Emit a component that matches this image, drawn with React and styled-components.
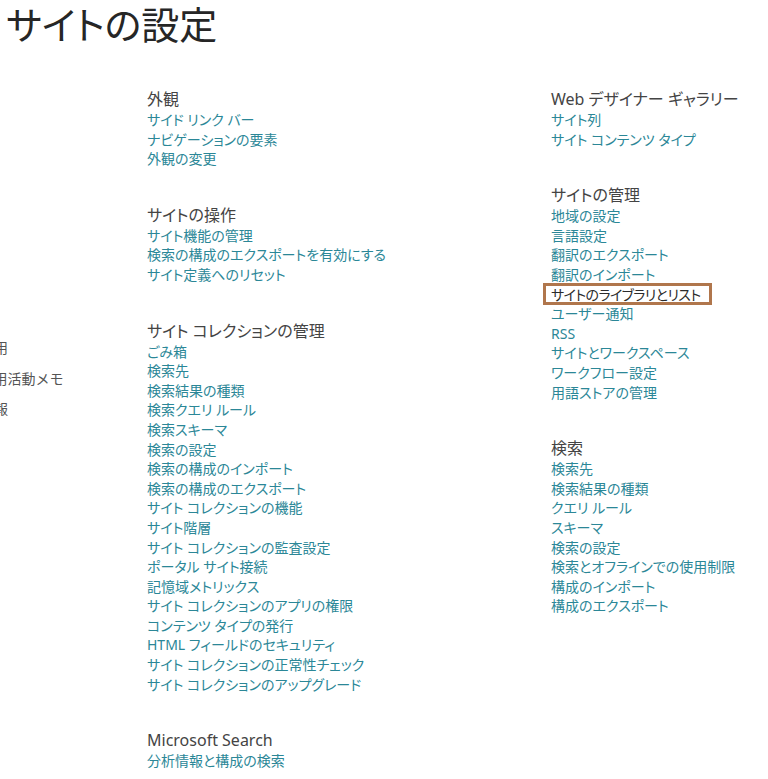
import React from 'react'
import styled, { createGlobalStyle } from 'styled-components'

const GlobalStyle = createGlobalStyle`
	html, body {
		margin: 0;
		padding: 0;
		background: #ffffff;
		overflow: hidden;
	}
	body {
		font-family: "Noto Sans", "Noto Sans CJK JP", sans-serif;
		font-feature-settings: "palt";
	}
`

const Page = styled.div`
	width: 768px;
	height: 779px;
	overflow: hidden;
`

const PageTitle = styled.h1`
	margin: 0 0 42px 6px;
	font-size: 38px;
	line-height: 46px;
	font-weight: 400;
	color: #262626;
	font-family: "Noto Sans CJK JP", sans-serif;
	font-feature-settings: "palt";
`

const Columns = styled.div`
	display: flex;
	align-items: flex-start;
`

const SideNav = styled.ul`
	list-style: none;
	margin: 0 0 0 -48px;
	padding: 0;
	width: 195px;
	flex-shrink: 0;
`

const NavItem = styled.li`
	font-size: 14px;
	line-height: 30.5px;
	color: #555555;
	white-space: nowrap;
	font-family: "Noto Sans CJK JP", sans-serif;
	font-feature-settings: normal;
`

const Column = styled.div`
	width: ${({ width }) => width}px;
	flex-shrink: 0;
`

const Group = styled.section`
	margin-bottom: 35px;
`

const GroupTitle = styled.h2`
	margin: 0;
	font-size: 16px;
	line-height: 22px;
	font-weight: 400;
	color: #444444;
	white-space: nowrap;
`

const LinkList = styled.ul`
	list-style: none;
	margin: 0;
	padding: 0;
`

const LinkItem = styled.li`
	font-size: 14px;
	line-height: 19.6px;
	white-space: nowrap;
`

const Link = styled.a`
	position: relative;
	display: inline-block;
	color: ${({ highlighted }) => (highlighted ? '#2b2b2b' : '#2b8797')};
	text-decoration: none;

	${({ highlighted }) => highlighted && `
		letter-spacing: -0.6px;

		&::after {
			content: '';
			position: absolute;
			top: -2px;
			bottom: -1px;
			left: -8px;
			right: -12px;
			border: 3px solid #b0764c;
		}
	`}
`

const navItems = [
	'ホーム', '会話', '文書', '共有', 'ページ', '予定表', '連絡先', 'タスク',
	'全社員用', 'チーム用活動メモ', '社内情報',
]

const middle = [
	{
		title: '外観',
		links: ['サイド リンク バー', 'ナビゲーションの要素', '外観の変更'],
	},
	{
		title: 'サイトの操作',
		links: ['サイト機能の管理', '検索の構成のエクスポートを有効にする', 'サイト定義へのリセット'],
	},
	{
		title: 'サイト コレクションの管理',
		links: [
			'ごみ箱', '検索先', '検索結果の種類', '検索クエリ ルール', '検索スキーマ', '検索の設定',
			'検索の構成のインポート', '検索の構成のエクスポート', 'サイト コレクションの機能', 'サイト階層',
			'サイト コレクションの監査設定', 'ポータル サイト接続', '記憶域メトリックス',
			'サイト コレクションのアプリの権限', 'コンテンツ タイプの発行', 'HTML フィールドのセキュリティ',
			'サイト コレクションの正常性チェック', 'サイト コレクションのアップグレード',
		],
	},
	{
		title: 'Microsoft Search',
		links: ['分析情報と構成の検索'],
	},
]

const right = [
	{
		title: 'Web デザイナー ギャラリー',
		links: ['サイト列', 'サイト コンテンツ タイプ'],
	},
	{
		title: 'サイトの管理',
		links: [
			'地域の設定', '言語設定', '翻訳のエクスポート', '翻訳のインポート', 'サイトのライブラリとリスト',
			'ユーザー通知', 'RSS', 'サイトとワークスペース', 'ワークフロー設定', '用語ストアの管理',
		],
	},
	{
		title: '検索',
		links: [
			'検索先', '検索結果の種類', 'クエリ ルール', 'スキーマ', '検索の設定',
			'検索とオフラインでの使用制限', '構成のインポート', '構成のエクスポート',
		],
	},
]

const SettingsColumn = ({ groups, width }) => (
	<Column width={width}>
		{groups.map(group => (
			<Group key={group.title}>
				<GroupTitle>{group.title}</GroupTitle>
				<LinkList>
					{group.links.map(link => (
						<LinkItem key={link}>
							<Link href="#" highlighted={link === 'サイトのライブラリとリスト' ? 1 : 0}>{link}</Link>
						</LinkItem>
					))}
				</LinkList>
			</Group>
		))}
	</Column>
)

const App = () => (
	<Page>
		<GlobalStyle />
		<PageTitle>サイトの設定</PageTitle>
		<Columns>
			<SideNav>
				{navItems.map(item => <NavItem key={item}>{item}</NavItem>)}
			</SideNav>
			<SettingsColumn groups={middle} width={404} />
			<SettingsColumn groups={right} width={217} />
		</Columns>
	</Page>
)

export default App
